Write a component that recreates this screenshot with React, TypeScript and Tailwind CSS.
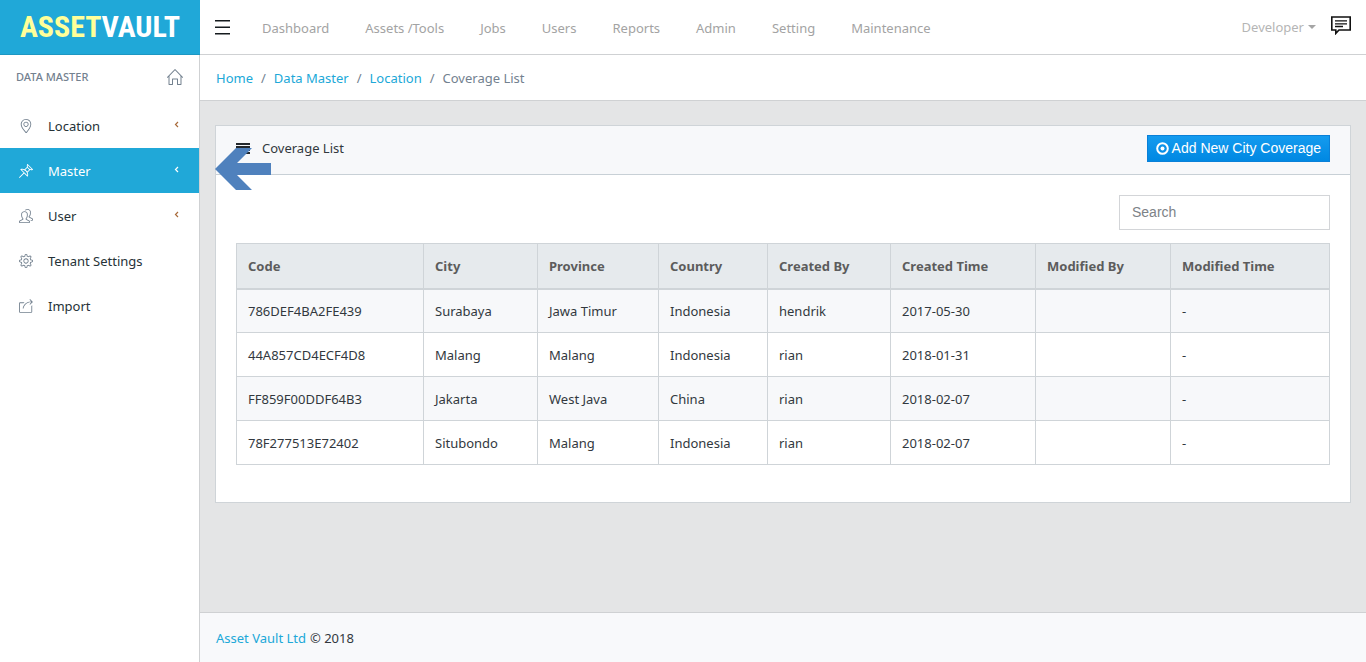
import { SlHome, SlLocationPin, SlPin, SlPeople, SlSettings, SlShareAlt } from "react-icons/sl";
import type { IconType } from "react-icons";

interface MenuItem {
  label: string;
  icon: IconType;
  hasChildren?: boolean;
  active?: boolean;
}

interface Coverage {
  code: string;
  city: string;
  province: string;
  country: string;
  createdBy: string;
  createdTime: string;
  modifiedBy: string;
  modifiedTime: string;
}

const topNav = ["Dashboard", "Assets /Tools", "Jobs", "Users", "Reports", "Admin", "Setting", "Maintenance"];

const menu: MenuItem[] = [
  { label: "Location", icon: SlLocationPin, hasChildren: true },
  { label: "Master", icon: SlPin, hasChildren: true, active: true },
  { label: "User", icon: SlPeople, hasChildren: true },
  { label: "Tenant Settings", icon: SlSettings },
  { label: "Import", icon: SlShareAlt },
];

const breadcrumb = ["Home", "Data Master", "Location"];

// Column widths, the last column takes the rest
const columns = [
  { title: "Code", width: "w-[187px]" },
  { title: "City", width: "w-[114px]" },
  { title: "Province", width: "w-[121px]" },
  { title: "Country", width: "w-[109px]" },
  { title: "Created By", width: "w-[123px]" },
  { title: "Created Time", width: "w-[145px]" },
  { title: "Modified By", width: "w-[135px]" },
  { title: "Modified Time", width: "" },
];

const rows: Coverage[] = [
  { code: "786DEF4BA2FE439", city: "Surabaya", province: "Jawa Timur", country: "Indonesia", createdBy: "hendrik", createdTime: "2017-05-30", modifiedBy: "", modifiedTime: "-" },
  { code: "44A857CD4ECF4D8", city: "Malang", province: "Malang", country: "Indonesia", createdBy: "rian", createdTime: "2018-01-31", modifiedBy: "", modifiedTime: "-" },
  { code: "FF859F00DDF64B3", city: "Jakarta", province: "West Java", country: "China", createdBy: "rian", createdTime: "2018-02-07", modifiedBy: "", modifiedTime: "-" },
  { code: "78F277513E72402", city: "Situbondo", province: "Malang", country: "Indonesia", createdBy: "rian", createdTime: "2018-02-07", modifiedBy: "", modifiedTime: "-" },
];

function Header() {
  return (
    <header className="flex h-[55px] shrink-0 border-b border-[#cfd1d3] bg-white">
      <a
        href="#"
        className="-mb-px flex w-[200px] shrink-0 items-center justify-center border-b border-[#1d97c2] bg-[#20a8d8] font-['Roboto_Condensed','Liberation_Sans_Narrow',sans-serif] text-[30px] leading-none font-bold text-white"
      >
        <span className="text-[#ffff99]">ASSET</span>VAULT
      </a>
      <button type="button" aria-label="Toggle sidebar" className="ml-[11px] px-1">
        <svg width="15" height="15" viewBox="0 0 15 15" fill="#151b1e">
          <rect width="15" height="1.5" y="0" />
          <rect width="15" height="1.5" y="6.5" />
          <rect width="15" height="1.5" y="13" />
        </svg>
      </button>
      <nav className="ml-7 flex flex-1 items-center gap-9 pt-px text-[#a3a3a3]">
        {topNav.map((item) => (
          <a key={item} href="#">
            {item}
          </a>
        ))}
      </nav>
      <button type="button" className="flex items-center gap-1 text-[#b5b5b5]">
        Developer
        <svg width="8" height="4" viewBox="0 0 8 4" fill="#a5a5a5">
          <path d="M0 0h8L4 4z" />
        </svg>
      </button>
      <button type="button" aria-label="Messages" className="mr-[14px] ml-[14px] pb-1">
        <svg width="22" height="20" viewBox="0 0 22 20" fill="none" stroke="#111" strokeWidth="1.6">
          <path d="M1.8 2h18.4v13H9l-3.2 3.4V15h-4z" />
          <path d="M5 5.8h12M5 8.8h12M5 11.5h8" strokeWidth="1.3" />
        </svg>
      </button>
    </header>
  );
}

function Sidebar() {
  return (
    <aside className="w-[200px] shrink-0 border-r border-[#cfd1d3] bg-white">
      <div className="flex h-12 items-center justify-between pr-4 pb-1 pl-4 text-[#73818f]">
        <span className="text-[11px] font-medium">DATA MASTER</span>
        <a href="#" aria-label="Data master home">
          <SlHome size={16} />
        </a>
      </div>
      <nav>
        {menu.map(({ label, icon: Icon, hasChildren, active }) => (
          <a
            key={label}
            href="#"
            className={`flex h-[45px] items-center pr-5 pl-[19px] ${active ? "bg-[#20a8d8] text-white" : "text-[#263238]"}`}
          >
            <Icon size={14} className={active ? "text-white" : "text-[#73818f]"} />
            <span className="ml-[15px] flex-1">{label}</span>
            {hasChildren && (
              <svg width="5" height="7" viewBox="0 0 5 7" fill="none" stroke={active ? "#fff" : "#a86a3a"} strokeWidth="1.2" className="mb-[3px]">
                <path d="M4 1L1.5 3.5 4 6" />
              </svg>
            )}
          </a>
        ))}
      </nav>
    </aside>
  );
}

function CoverageTable() {
  return (
    <table className="w-full table-fixed border-collapse border border-[#cfd4d8] text-left">
      <thead>
        <tr className="h-[45px] border-b-2 border-[#cfd4d8] bg-[#e6eaed] text-[#5c5c5c]">
          {columns.map((c) => (
            <th key={c.title} className={`border-r border-[#cfd4d8] px-[11px] font-bold ${c.width}`}>
              {c.title}
            </th>
          ))}
        </tr>
      </thead>
      <tbody>
        {rows.map((r) => (
          <tr key={r.code} className="h-11 border-b border-[#cfd4d8] odd:bg-[#f7f8fa]">
            {Object.values(r).map((value, i) => (
              <td key={i} className="border-r border-[#cfd4d8] px-[11px]">
                {value}
              </td>
            ))}
          </tr>
        ))}
      </tbody>
    </table>
  );
}

function CoverageCard() {
  return (
    <section className="relative border border-[#cfd4d8] bg-white">
      <div className="flex h-[49px] items-center justify-between border-b border-[#c8d0d6] bg-[#f7f8fa] px-5">
        <h1 className="flex items-center gap-3 pb-1">
          <svg width="14" height="11" viewBox="0 0 14 11" fill="#23282c">
            <path d="M0 0h14v2H0zM0 3h14v2H0zM0 6h14v2H0zM0 9h14v2H0z" />
          </svg>
          Coverage List
        </h1>
        <button
          type="button"
          className="mb-1 flex h-[27px] items-center gap-[3px] border border-[#0a80d8] bg-linear-to-b from-[#149bef] to-[#0088e2] pr-2 pl-2 font-['Liberation_Sans',sans-serif] text-sm text-white"
        >
          <svg width="13" height="13" viewBox="0 0 13 13" fill="none" stroke="#fff">
            <circle cx="6.5" cy="6.5" r="5.3" strokeWidth="2" />
            <circle cx="6.5" cy="6.5" r="2" fill="#fff" stroke="none" />
          </svg>
          Add New City Coverage
        </button>
      </div>
      <div className="flex flex-col px-5 pt-5 pb-[37px]">
        <input
          type="search"
          aria-label="Search"
          placeholder="Search"
          className="mb-[13px] h-[35px] w-[211px] self-end border border-[#d3d5d8] bg-white px-3 pb-px font-['Liberation_Sans',sans-serif] text-sm placeholder:text-[#7d8287]"
        />
        <CoverageTable />
      </div>
      {/* pointer to the active menu entry */}
      <svg width="56" height="42" viewBox="0 0 56 42" fill="#4f81bd" className="absolute top-[22px] -left-px">
        <path d="M0 21L21 0h16L22 15h34v12H22l15 15H21z" />
      </svg>
    </section>
  );
}

export default function App() {
  return (
    <div className="flex min-h-screen flex-col bg-[#e4e5e6] font-['Noto_Sans','Open_Sans',sans-serif] text-[13px] leading-5 text-[#32383e]">
      <Header />
      <div className="flex flex-1">
        <Sidebar />
        <div className="flex min-w-0 flex-1 flex-col">
          <nav aria-label="Breadcrumb" className="flex h-[46px] items-center gap-2 border-b border-[#cfd1d3] bg-white px-4">
            {breadcrumb.map((item) => (
              <span key={item} className="flex gap-2">
                <a href="#" className="text-[#20a8d8]">
                  {item}
                </a>
                <span className="text-[#73818f]">/</span>
              </span>
            ))}
            <span className="text-[#73818f]">Coverage List</span>
          </nav>
          <main className="flex-1 px-[15px] pt-6 pb-6">
            <CoverageCard />
          </main>
          <footer className="flex h-[50px] items-center gap-1 border-t border-[#cfd1d3] bg-[#f8f9fb] px-4">
            <a href="#" className="text-[#20a8d8]">
              Asset Vault Ltd
            </a>
            <span>© 2018</span>
          </footer>
        </div>
      </div>
    </div>
  );
}
